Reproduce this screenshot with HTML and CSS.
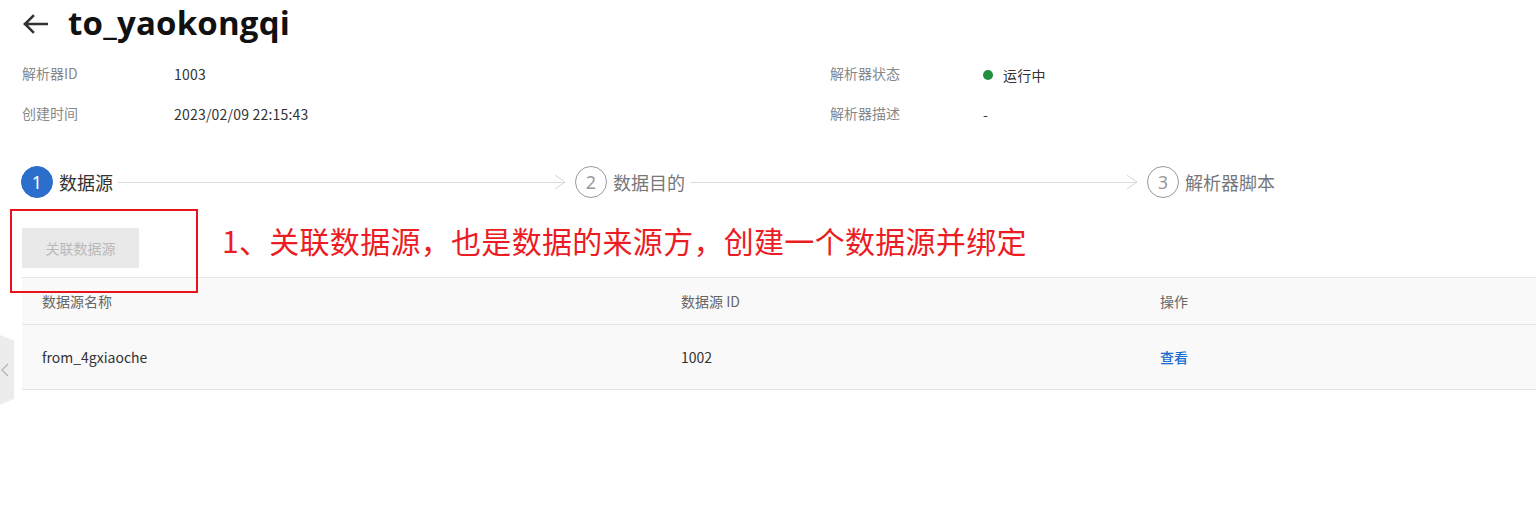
FILE: index.html
```html
<!DOCTYPE html>
<html lang="zh-CN">
<head>
<meta charset="utf-8">
<title>to_yaokongqi</title>
<link rel="stylesheet" href="styles.css">
</head>
<body>
<div class="page">
  <header class="head">
    <svg class="back" width="26" height="20" viewBox="0 0 26 20" aria-hidden="true">
      <path d="M25 10H3M11 2L3 10l8 8" fill="none" stroke="#333" stroke-width="2.6" stroke-linecap="square"/>
    </svg>
    <h1 class="title">to_yaokongqi</h1>
  </header>

  <section class="info">
    <div class="lbl">解析器ID</div>
    <div class="val">1003</div>
    <div class="lbl">解析器状态</div>
    <div class="val status"><span class="dot"></span>运行中</div>
    <div class="lbl">创建时间</div>
    <div class="val">2023/02/09 22:15:43</div>
    <div class="lbl">解析器描述</div>
    <div class="val">-</div>
  </section>

  <nav class="steps">
    <div class="step active"><span class="num">1</span><span class="slabel">数据源</span></div>
    <div class="sline"><svg class="arr" width="12" height="16" viewBox="0 0 12 16"><path d="M1 1l10 7-10 7" fill="none" stroke="#d6d6d6" stroke-width="1"/></svg></div>
    <div class="step"><span class="num">2</span><span class="slabel">数据目的</span></div>
    <div class="sline"><svg class="arr" width="12" height="16" viewBox="0 0 12 16"><path d="M1 1l10 7-10 7" fill="none" stroke="#d6d6d6" stroke-width="1"/></svg></div>
    <div class="step"><span class="num">3</span><span class="slabel">解析器脚本</span></div>
  </nav>

  <div class="actions">
    <button class="btn" disabled>关联数据源</button>
    <div class="markbox"></div>
    <div class="note">1、关联数据源，也是数据的来源方，创建一个数据源并绑定</div>
  </div>

  <div class="table">
    <div class="tr th">
      <div class="c1">数据源名称</div>
      <div class="c2">数据源 ID</div>
      <div class="c3">操作</div>
    </div>
    <div class="tr td">
      <div class="c1">from_4gxiaoche</div>
      <div class="c2">1002</div>
      <div class="c3"><a class="link" href="#">查看</a></div>
    </div>
  </div>
</div>
<div class="sidetab"><svg width="8" height="14" viewBox="0 0 8 14"><path d="M7 1L1 7l6 6" fill="none" stroke="#b5b5b5" stroke-width="1.3"/></svg></div>
</body>
</html>
```

FILE: styles.css
```css
* { box-sizing: border-box; }
html, body { margin: 0; padding: 0; background: #fff; }
body {
  font-family: "Noto Sans CJK SC", "Noto Sans", sans-serif;
  font-size: 14px;
  color: #333;
  position: relative;
  width: 1536px;
  height: 519px;
  overflow: hidden;
}
.page { padding-left: 22px; }

.head {
  display: flex;
  align-items: center;
  height: 46px;
  gap: 20px;
}
.back { display: block; margin-top: 2px; }
.title {
  margin: 0;
  font-family: "Open Sans", "Noto Sans", sans-serif;
  font-weight: 700;
  font-size: 33px;
  line-height: 40px;
  color: #111;
  letter-spacing: 0.2px;
}

.info {
  display: grid;
  grid-template-columns: 152px 656px 153px 1fr;
  grid-auto-rows: 40px;
  margin-top: 8px;
  align-items: center;
}
.lbl { color: #888; font-size: 14px; line-height: 20px; margin-top: -2px; }
.val { color: #333; font-size: 14px; line-height: 20px; margin-top: -1px; letter-spacing: 0.2px; }
.status { display: flex; align-items: center; margin-top: 2px; }
.dot {
  width: 10px; height: 10px; border-radius: 50%;
  background: #1f8f3e; margin-right: 10px;
}

.steps {
  display: flex;
  align-items: center;
  height: 32px;
  margin-top: 32px;
  margin-left: -1px;
}
.step { display: flex; align-items: center; }
.num {
  width: 32px; height: 32px; border-radius: 50%;
  border: 1px solid #999;
  color: #999;
  display: flex; align-items: center; justify-content: center;
  font-family: "Noto Sans", sans-serif;
  font-size: 18px;
}
.step.active .num { background: #2c6ecb; border-color: #2c6ecb; color: #fff; }
.slabel {
  margin-left: 6px;
  font-size: 18px;
  line-height: 24px;
  color: #777;
}
.step.active .slabel { color: #333; }
.sline {
  width: 447px;
  height: 1px;
  background: #dcdcdc;
  margin: 0 10px 0 5px;
  position: relative;
}
.arr { position: absolute; right: -1px; top: -8px; }

.actions {
  position: relative;
  height: 40px;
  margin-top: 30px;
}
.btn {
  width: 117px; height: 40px;
  border: 0;
  background: #e9e9e9;
  color: #b9b9b9;
  font-family: "Noto Sans CJK SC", sans-serif;
  font-size: 14px;
  padding: 0;
}
.markbox {
  position: absolute;
  left: -12px; top: -19px;
  width: 188px; height: 84px;
  border: 2px solid #e8141d;
}
.note {
  position: absolute;
  left: 200px; top: -8px;
  font-size: 30px;
  line-height: 40px;
  color: #ec1c24;
  white-space: nowrap;
  letter-spacing: 0.3px;
}

.table {
  margin-top: 9px;
  border-top: 1px solid #e6e6e6;
  background: #f9f9f9;
}
.tr { display: flex; align-items: center; border-bottom: 1px solid #e6e6e6; }
.th { height: 47px; color: #666; }
.td { height: 65px; color: #333; }
.tr > div { padding-left: 20px; }
.c1 { width: 639px; }
.c2 { width: 479px; }
.c3 { flex: 1; }
.link { color: #1a6dd0; text-decoration: none; font-weight: 500; }

.sidetab {
  position: absolute;
  left: 0; top: 335px;
  width: 14px; height: 70px;
  background: #ececec;
  clip-path: polygon(0 0, 100% 8%, 100% 91%, 0 100%);
  display: flex; align-items: center; justify-content: flex-start;
  padding-left: 1px;
}
```
